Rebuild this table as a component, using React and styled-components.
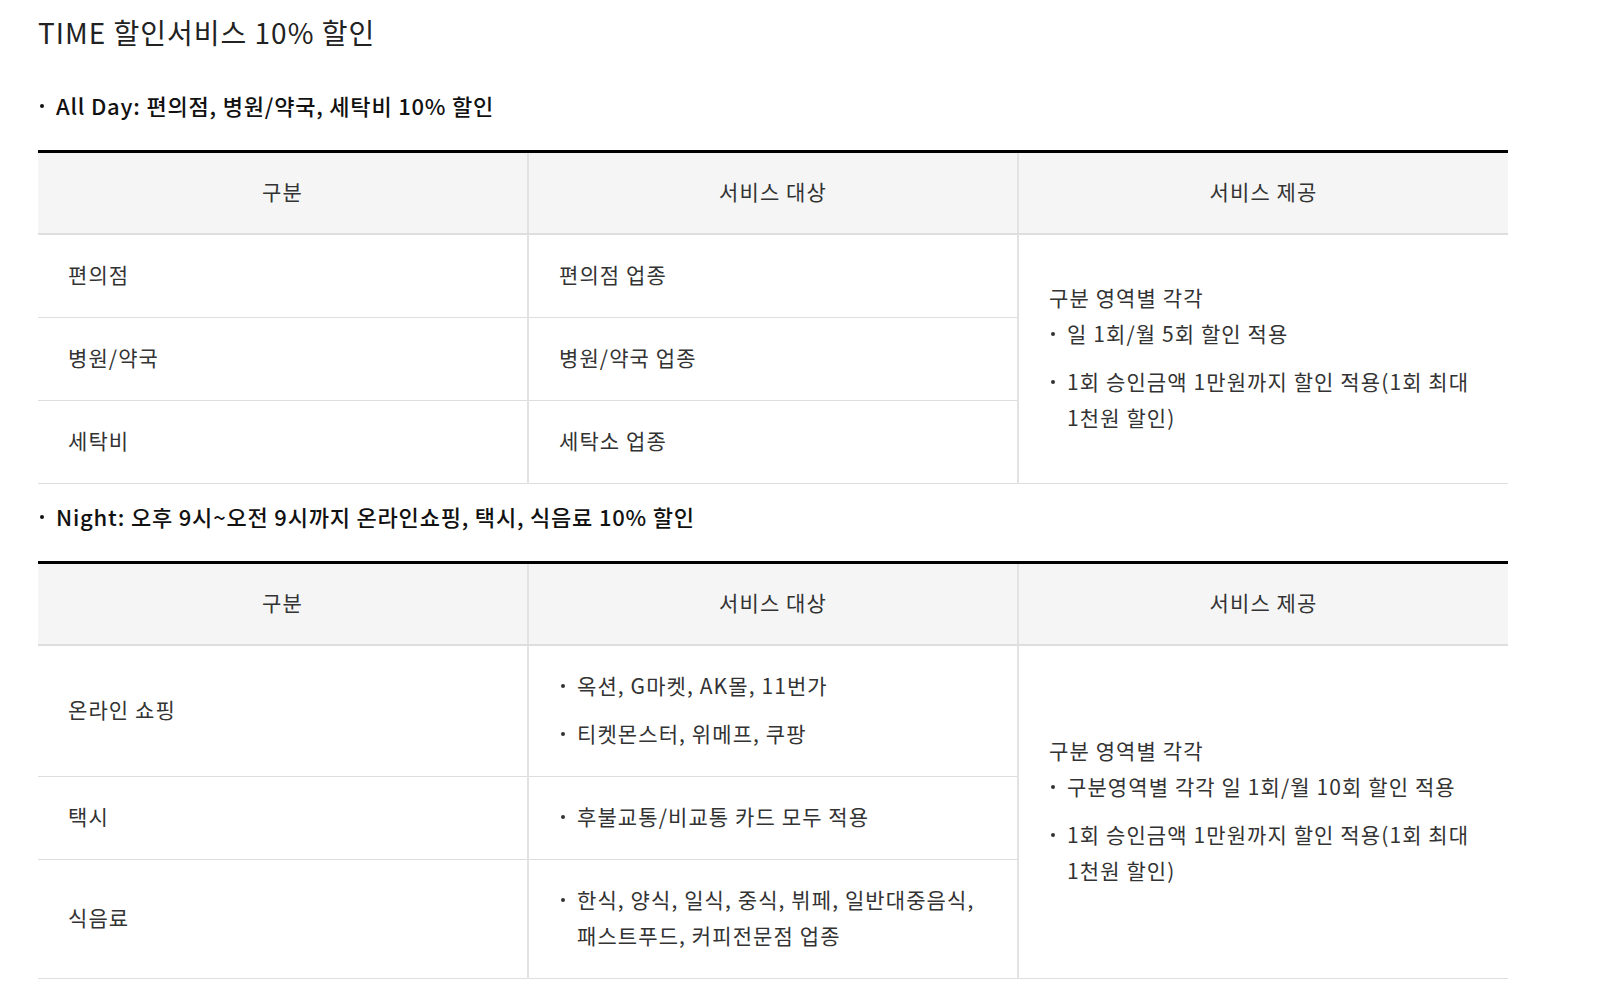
import React from "react";
import styled, { createGlobalStyle } from "styled-components";

const GlobalStyle = createGlobalStyle`
  html, body {
    margin: 0;
    padding: 0;
    background: #ffffff;
  }
  body {
    font-family: "Noto Sans CJK KR", "Noto Sans", sans-serif;
    color: #333;
  }
  * { box-sizing: border-box; }
`;

const Page = styled.div`
  padding: 12px 38px 20px;
  width: 1546px;
`;

const Title = styled.h2`
  margin: 0;
  font-size: 28px;
  line-height: 40px;
  font-weight: 400;
  color: #222;
  letter-spacing: 1px;
`;

const Section = styled.section`
  margin-top: ${(p) => p.$gap}px;
`;

const Heading = styled.h3`
  position: relative;
  margin: 0 0 27px;
  padding-left: 18px;
  font-size: 22px;
  line-height: 36px;
  font-weight: 500;
  color: #111;
  letter-spacing: 0.8px;

  &::before {
    content: "";
    position: absolute;
    left: 2px;
    top: 17px;
    width: 4px;
    height: 4px;
    border-radius: 50%;
    background: #111;
  }
`;

const Table = styled.table`
  width: 1470px;
  table-layout: fixed;
  border-collapse: collapse;
  border-top: 3px solid #000;
`;

const HeadCell = styled.th`
  padding: 20px 20px 24px;
  background: #f5f5f5;
  border-bottom: 2px solid #dedede;
  border-left: ${(p) => (p.$first ? "none" : "2px solid #e2e2e2")};
  font-size: 21px;
  line-height: 36px;
  font-weight: 400;
  letter-spacing: 1.1px;
  color: #333;
  text-align: center;
`;

const Cell = styled.td`
  padding: 21px 20px 25px 30px;
  border-bottom: 1px solid #dedede;
  border-left: ${(p) => (p.$first ? "none" : "2px solid #e2e2e2")};
  font-size: 21px;
  line-height: 36px;
  letter-spacing: 1.1px;
  color: #333;
  vertical-align: middle;
  text-align: left;
  word-break: keep-all;
`;

const Lead = styled.p`
  margin: 0;
`;

const List = styled.ul`
  margin: 0;
  padding: 0;
  list-style: none;
`;

const Item = styled.li`
  position: relative;
  padding-left: 18px;

  & + & {
    margin-top: 12px;
  }

  &::before {
    content: "";
    position: absolute;
    left: 2px;
    top: 17px;
    width: 4px;
    height: 4px;
    border-radius: 50%;
    background: #333;
  }
`;

const Bullets = ({ items }) => (
  <List>
    {items.map((t) => (
      <Item key={t}>{t}</Item>
    ))}
  </List>
);

const Provide = ({ items }) => (
  <>
    <Lead>구분 영역별 각각</Lead>
    <Bullets items={items} />
  </>
);

const Header = () => (
  <thead>
    <tr>
      <HeadCell $first>구분</HeadCell>
      <HeadCell>서비스 대상</HeadCell>
      <HeadCell>서비스 제공</HeadCell>
    </tr>
  </thead>
);

const allDay = [
  ["편의점", "편의점 업종"],
  ["병원/약국", "병원/약국 업종"],
  ["세탁비", "세탁소 업종"],
];

const night = [
  ["온라인 쇼핑", ["옥션, G마켓, AK몰, 11번가", "티켓몬스터, 위메프, 쿠팡"]],
  ["택시", ["후불교통/비교통 카드 모두 적용"]],
  ["식음료", ["한식, 양식, 일식, 중식, 뷔페, 일반대중음식, 패스트푸드, 커피전문점 업종"]],
];

export default function App() {
  return (
    <>
      <GlobalStyle />
      <Page>
        <Title>TIME 할인서비스 10% 할인</Title>

        <Section $gap={35}>
          <Heading>All Day: 편의점, 병원/약국, 세탁비 10% 할인</Heading>
          <Table>
            <Header />
            <tbody>
              {allDay.map(([k, v], i) => (
                <tr key={k}>
                  <Cell $first>{k}</Cell>
                  <Cell>{v}</Cell>
                  {i === 0 && (
                    <Cell rowSpan={3}>
                      <Provide
                        items={[
                          "일 1회/월 5회 할인 적용",
                          "1회 승인금액 1만원까지 할인 적용(1회 최대 1천원 할인)",
                        ]}
                      />
                    </Cell>
                  )}
                </tr>
              ))}
            </tbody>
          </Table>
        </Section>

        <Section $gap={14}>
          <Heading>Night: 오후 9시~오전 9시까지 온라인쇼핑, 택시, 식음료 10% 할인</Heading>
          <Table>
            <Header />
            <tbody>
              {night.map(([k, v], i) => (
                <tr key={k}>
                  <Cell $first>{k}</Cell>
                  <Cell>
                    <Bullets items={v} />
                  </Cell>
                  {i === 0 && (
                    <Cell rowSpan={3}>
                      <Provide
                        items={[
                          "구분영역별 각각 일 1회/월 10회 할인 적용",
                          "1회 승인금액 1만원까지 할인 적용(1회 최대 1천원 할인)",
                        ]}
                      />
                    </Cell>
                  )}
                </tr>
              ))}
            </tbody>
          </Table>
        </Section>
      </Page>
    </>
  );
}
